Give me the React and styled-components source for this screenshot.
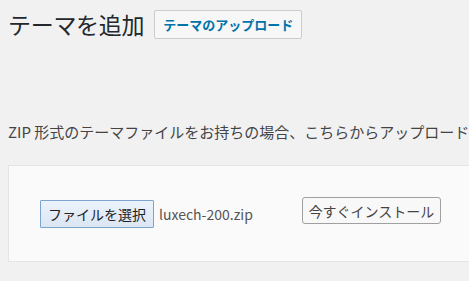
import React from "react";
import styled, { createGlobalStyle } from "styled-components";

const Global = createGlobalStyle`
  html, body { margin: 0; padding: 0; background: #f1f1f1; overflow: hidden; }
  body { font-family: "Noto Sans CJK JP", "Noto Sans", sans-serif; color: #444; width: 469px; height: 281px; }
`;

const Wrap = styled.div`
  padding: 10px 0 0 8px;
`;

const Header = styled.div`
  display: flex;
  align-items: center;
  gap: 10px;
  height: 29px;
`;

const Title = styled.h1`
  margin: 0;
  font-size: 23px;
  font-weight: 400;
  line-height: 29px;
  letter-spacing: -0.3px;
  color: #23282d;
`;

const ActionButton = styled.a`
  display: inline-flex;
  align-items: center;
  box-sizing: border-box;
  height: 29px;
  padding: 0 8px;
  border: 1px solid #ccc;
  border-radius: 2px;
  background: #f7f7f7;
  color: #0073aa;
  font-size: 13px;
  font-weight: 600;
  text-decoration: none;
`;

const Description = styled.p`
  margin: 83px 0 0;
  font-size: 15px;
  line-height: 20px;
  color: #444;
  white-space: nowrap;
`;

const UploadBox = styled.form`
  margin-top: 23px;
  box-sizing: border-box;
  height: 97px;
  border: 1px solid #e5e5e5;
  border-right: none;
  background: #fafafa;
  display: flex;
  align-items: center;
  padding-left: 31px;
`;

const FileButton = styled.label`
  box-sizing: border-box;
  height: 28px;
  width: 114px;
  display: inline-flex;
  align-items: center;
  justify-content: center;
  border: 1px solid #7fa3cf;
  border-radius: 1px;
  background: linear-gradient(#ebf2fa, #dbe6f3);
  color: #222;
  font-size: 14px;
`;

const FileName = styled.span`
  margin-left: 5px;
  font-size: 14px;
  color: #555;
  width: 143px;
`;

const InstallButton = styled.button`
  box-sizing: border-box;
  height: 27px;
  width: 139px;
  margin-top: -6px;
  border: 1px solid #a0a0a0;
  border-radius: 3px;
  background: #f8f8f8;
  color: #444;
  font-family: inherit;
  font-size: 14px;
  padding: 0;
`;

export default function App() {
  return (
    <>
      <Global />
      <Wrap>
        <Header>
          <Title>テーマを追加</Title>
          <ActionButton href="#">テーマのアップロード</ActionButton>
        </Header>
        <Description>ZIP 形式のテーマファイルをお持ちの場合、こちらからアップロード</Description>
        <UploadBox>
          <FileButton>ファイルを選択</FileButton>
          <FileName>luxech-200.zip</FileName>
          <InstallButton type="button">今すぐインストール</InstallButton>
        </UploadBox>
      </Wrap>
    </>
  );
}
